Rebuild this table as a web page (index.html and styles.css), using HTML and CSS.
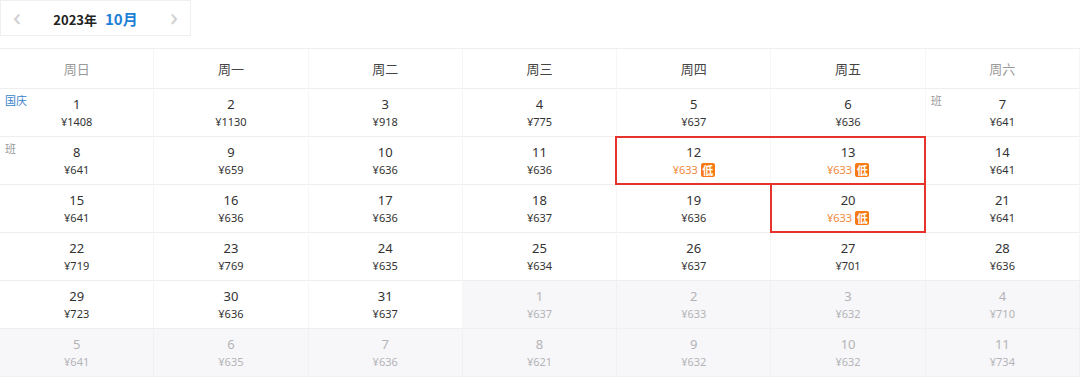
FILE: index.html
```html
<!DOCTYPE html>
<html lang="zh">
<head>
<meta charset="utf-8">
<link rel="stylesheet" href="styles.css">
</head>
<body>
<div class="nav">
  <span class="arrow">&#x2039;</span>
  <span class="title"><span class="year">2023年</span><span class="month">10月</span></span>
  <span class="arrow">&#x203A;</span>
</div>
<div class="cal">
  <div class="head wk">周日</div><div class="head">周一</div><div class="head">周二</div><div class="head">周三</div><div class="head">周四</div><div class="head">周五</div><div class="head wk">周六</div>

  <div class="cell"><span class="tag hol">国庆</span><b>1</b><i>¥1408</i></div>
  <div class="cell"><b>2</b><i>¥1130</i></div>
  <div class="cell"><b>3</b><i>¥918</i></div>
  <div class="cell"><b>4</b><i>¥775</i></div>
  <div class="cell"><b>5</b><i>¥637</i></div>
  <div class="cell"><b>6</b><i>¥636</i></div>
  <div class="cell"><span class="tag work">班</span><b>7</b><i>¥641</i></div>

  <div class="cell"><span class="tag work">班</span><b>8</b><i>¥641</i></div>
  <div class="cell"><b>9</b><i>¥659</i></div>
  <div class="cell"><b>10</b><i>¥636</i></div>
  <div class="cell"><b>11</b><i>¥636</i></div>
  <div class="cell low hl-a"><b>12</b><i>¥633<em>低</em></i></div>
  <div class="cell low hl-b"><b>13</b><i>¥633<em>低</em></i></div>
  <div class="cell"><b>14</b><i>¥641</i></div>

  <div class="cell"><b>15</b><i>¥641</i></div>
  <div class="cell"><b>16</b><i>¥636</i></div>
  <div class="cell"><b>17</b><i>¥636</i></div>
  <div class="cell"><b>18</b><i>¥637</i></div>
  <div class="cell"><b>19</b><i>¥636</i></div>
  <div class="cell low hl-c"><b>20</b><i>¥633<em>低</em></i></div>
  <div class="cell"><b>21</b><i>¥641</i></div>

  <div class="cell"><b>22</b><i>¥719</i></div>
  <div class="cell"><b>23</b><i>¥769</i></div>
  <div class="cell"><b>24</b><i>¥635</i></div>
  <div class="cell"><b>25</b><i>¥634</i></div>
  <div class="cell"><b>26</b><i>¥637</i></div>
  <div class="cell"><b>27</b><i>¥701</i></div>
  <div class="cell"><b>28</b><i>¥636</i></div>

  <div class="cell"><b>29</b><i>¥723</i></div>
  <div class="cell"><b>30</b><i>¥636</i></div>
  <div class="cell"><b>31</b><i>¥637</i></div>
  <div class="cell next"><b>1</b><i>¥637</i></div>
  <div class="cell next"><b>2</b><i>¥633</i></div>
  <div class="cell next"><b>3</b><i>¥632</i></div>
  <div class="cell next"><b>4</b><i>¥710</i></div>

  <div class="cell next"><b>5</b><i>¥641</i></div>
  <div class="cell next"><b>6</b><i>¥635</i></div>
  <div class="cell next"><b>7</b><i>¥636</i></div>
  <div class="cell next"><b>8</b><i>¥621</i></div>
  <div class="cell next"><b>9</b><i>¥632</i></div>
  <div class="cell next"><b>10</b><i>¥632</i></div>
  <div class="cell next"><b>11</b><i>¥734</i></div>
</div>
</body>
</html>
```
FILE: styles.css
```css
* { box-sizing: border-box; }
html, body { margin: 0; padding: 0; background: #fff; }
body {
  width: 1080px;
  height: 378px;
  overflow: hidden;
  font-family: "Noto Sans", "Noto Sans CJK SC", sans-serif;
  color: #333;
}
.nav {
  width: 191px;
  height: 36px;
  border: 1px solid #efefef;
  display: flex;
  align-items: center;
  justify-content: space-between;
  padding: 0 12px 0 12px;
}
.arrow {
  font-size: 26px;
  line-height: 1;
  color: #cfcfcf;
  margin-top: -4px;
}
.title { display: flex; gap: 8px; align-items: baseline; font-family: "Noto Sans CJK SC", sans-serif; }
.year { font-size: 13px; font-weight: 700; color: #222; }
.month { font-size: 15px; font-weight: 700; color: #1e7fd6; }
.cal {
  margin-top: 12px;
  display: grid;
  grid-template-columns: repeat(7, 1fr);
  grid-template-rows: 40px repeat(6, 48px);
  border-top: 1px solid #eee;
}
.head {
  display: flex;
  align-items: center;
  justify-content: center;
  font-family: "Noto Sans CJK SC", sans-serif;
  font-size: 13px;
  color: #444;
  border-bottom: 1px solid #eee;
  border-right: 1px solid #f6f6f6;
}
.head.wk { color: #9a9a9a; }
.cell {
  position: relative;
  display: flex;
  flex-direction: column;
  align-items: center;
  justify-content: center;
  border-bottom: 1px solid #eee;
  border-right: 1px solid #f6f6f6;
  padding-top: 1px;
}
.cell b {
  font-weight: 400;
  font-size: 13px;
  line-height: 17px;
  color: #333;
}
.cell i {
  font-style: normal;
  font-size: 11px;
  line-height: 17px;
  color: #333;
  display: flex;
  align-items: center;
}
.cell.low i { color: #f08a3c; }
.cell em {
  font-style: normal;
  font-family: "Noto Sans CJK SC", sans-serif;
  font-weight: 700;
  font-size: 11px;
  line-height: 14px;
  width: 14px;
  height: 14px;
  text-align: center;
  color: #fff;
  background: #f77b14;
  border-radius: 2px;
  margin-left: 3px;
}
.cell.next { background: #f7f7f9; border-color: #f0f0f2; }
.cell.next b, .cell.next i { color: #b4b4b8; }
.tag {
  position: absolute;
  left: 5px;
  top: 4px;
  font-family: "Noto Sans CJK SC", sans-serif;
  font-size: 11px;
  line-height: 14px;
}
.tag.hol { color: #3b7fc8; }
.tag.work { color: #9a9a9a; }
.hl-a::after, .hl-b::after, .hl-c::after {
  content: "";
  position: absolute;
  pointer-events: none;
  border: 2px solid #e5342e;
}
.hl-a::after { left: -2px; right: -1px; top: -1px; bottom: -1px; border-right: none; }
.hl-b::after { left: 0; right: -1px; top: -1px; bottom: -1px; border-left: none; }
.hl-c::after { left: -1px; right: -1px; top: 0; bottom: -1px; border-top: none; }
```
